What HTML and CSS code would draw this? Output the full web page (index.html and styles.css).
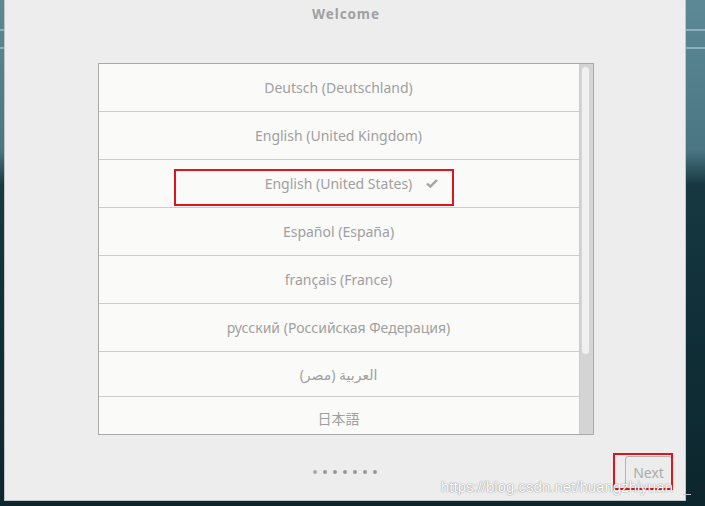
FILE: index.html
```html
<!DOCTYPE html>
<html>
<head>
<meta charset="utf-8">
<link rel="stylesheet" href="styles.css">
</head>
<body>
<div class="desktop">
  <div class="window">
    <div class="titlebar"><span class="title">Welcome</span></div>
    <div class="list">
      <div class="rows">
        <div class="row"><span class="label">Deutsch (Deutschland)</span></div>
        <div class="row"><span class="label">English (United Kingdom)</span></div>
        <div class="row"><span class="label">English (United States)<svg class="check" width="12" height="9" viewBox="0 0 12 9"><path d="M1 4.5 L4.3 7.6 L11 1" fill="none" stroke="#a3a3a3" stroke-width="2.4"/></svg></span></div>
        <div class="row"><span class="label">Español (España)</span></div>
        <div class="row"><span class="label">français (France)</span></div>
        <div class="row"><span class="label">русский (Российская Федерация)</span></div>
        <div class="row row-short"><span class="label">العربية (مصر)</span></div>
        <div class="row row-last"><span class="label cjk">日本語</span></div>
      </div>
      <div class="scrollbar"><div class="thumb"></div></div>
    </div>
    <div class="footer">
      <div></div>
      <div class="dots">
        <span class="dot first"></span><span class="dot"></span><span class="dot"></span><span class="dot"></span><span class="dot"></span><span class="dot"></span><span class="dot"></span>
      </div>
      <button class="next">Next</button>
    </div>
  </div>
  <div class="mark mark-row"></div>
  <div class="mark mark-next"></div>
  <div class="watermark">https://blog.csdn.net/huangzhiyuan</div>
  <div class="underscore"></div>
</div>
</body>
</html>
```
FILE: styles.css
```css
html, body {
  margin: 0;
  padding: 0;
}
body {
  width: 705px;
  height: 506px;
  overflow: hidden;
  font-family: "Noto Sans", "DejaVu Sans", sans-serif;
  background-color: #122e36;
  background-image:
    linear-gradient(to bottom, transparent 29px, rgba(160,195,205,0.7) 29px, rgba(160,195,205,0.7) 31px, transparent 31px, transparent 47px, rgba(160,195,205,0.7) 47px, rgba(160,195,205,0.7) 49px, transparent 49px),
    linear-gradient(to bottom, #5d8996 0px, #4a7684 150px, #173841 185px, #11303a 300px, #0d262d 506px);
}
.desktop {
  position: relative;
  width: 705px;
  height: 506px;
}
.window {
  margin-left: 4px;
  width: 682px;
  height: 501px;
  box-sizing: border-box;
  background: #ededed;
  border: 1px solid #c4c4c4;
  border-top: none;
  display: flex;
  flex-direction: column;
}
.titlebar {
  height: 63px;
  display: flex;
  justify-content: center;
  align-items: flex-start;
  flex-shrink: 0;
}
.title {
  margin-top: 5px;
  margin-left: 2px;
  font-weight: bold;
  font-size: 13.5px;
  letter-spacing: 0.9px;
  color: #a0a0a0;
}
.list {
  align-self: center;
  margin-left: 1px;
  width: 496px;
  height: 372px;
  box-sizing: border-box;
  border: 1px solid #a9a9a9;
  background: #fafaf9;
  display: flex;
  overflow: hidden;
  flex-shrink: 0;
}
.rows {
  flex: 1;
  overflow: hidden;
}
.row {
  height: 47px;
  border-bottom: 1px solid #cdcdcd;
  display: flex;
  justify-content: center;
  align-items: center;
}
.row-short {
  height: 44px;
}
.row-last {
  align-items: flex-start;
  padding-top: 12px;
  box-sizing: border-box;
}
.label {
  position: relative;
  font-size: 14px;
  color: #a0a0a0;
}
.cjk {
  font-family: "Noto Sans CJK JP", sans-serif;
  font-size: 14px;
  line-height: 18px;
}
.check {
  position: absolute;
  left: calc(100% + 14px);
  top: 5px;
}
.scrollbar {
  background: #d4d4d4;
  border-left: 1px solid #cbcbcb;
  padding: 3px 3px 0 2px;
  box-sizing: border-box;
  width: 14px;
}
.thumb {
  width: 7px;
  height: 287px;
  border-radius: 4px;
  background: #f0f0f0;
}
.footer {
  flex: 1;
  display: grid;
  grid-template-columns: 1fr auto 1fr;
  padding: 21px 13px 0 11px;
  align-items: start;
}
.dots {
  display: flex;
  gap: 6px;
  margin-top: 14px;
  margin-left: 1px;
}
.dot {
  width: 4px;
  height: 4px;
  border-radius: 50%;
  background: #989898;
}
.dot.first {
  background: #a9a9a9;
}
.next {
  justify-self: end;
  width: 47px;
  height: 33px;
  box-sizing: border-box;
  border: 1px solid #b4b4b4;
  border-radius: 3px;
  background: #ececec;
  font-family: "Noto Sans", "DejaVu Sans", sans-serif;
  font-size: 14px;
  line-height: 30px;
  color: #ababab;
  padding: 0;
  margin: 0;
}
.mark {
  position: absolute;
  border: 2px solid #e0141c;
  box-sizing: border-box;
}
.mark-row {
  left: 174px;
  top: 169px;
  width: 280px;
  height: 37px;
}
.mark-next {
  left: 613px;
  top: 453px;
  width: 60px;
  height: 37px;
}
.watermark {
  position: absolute;
  left: 441px;
  top: 478px;
  font-family: "Liberation Sans", Arial, sans-serif;
  font-size: 15px;
  color: #ffffff;
  text-shadow: 0 0 1px rgba(0,0,0,0.45), 0 0 2px rgba(0,0,0,0.2);
  white-space: nowrap;
}
.underscore {
  position: absolute;
  left: 683px;
  top: 494px;
  width: 8px;
  height: 1px;
  background: #bfc6c8;
}
```
